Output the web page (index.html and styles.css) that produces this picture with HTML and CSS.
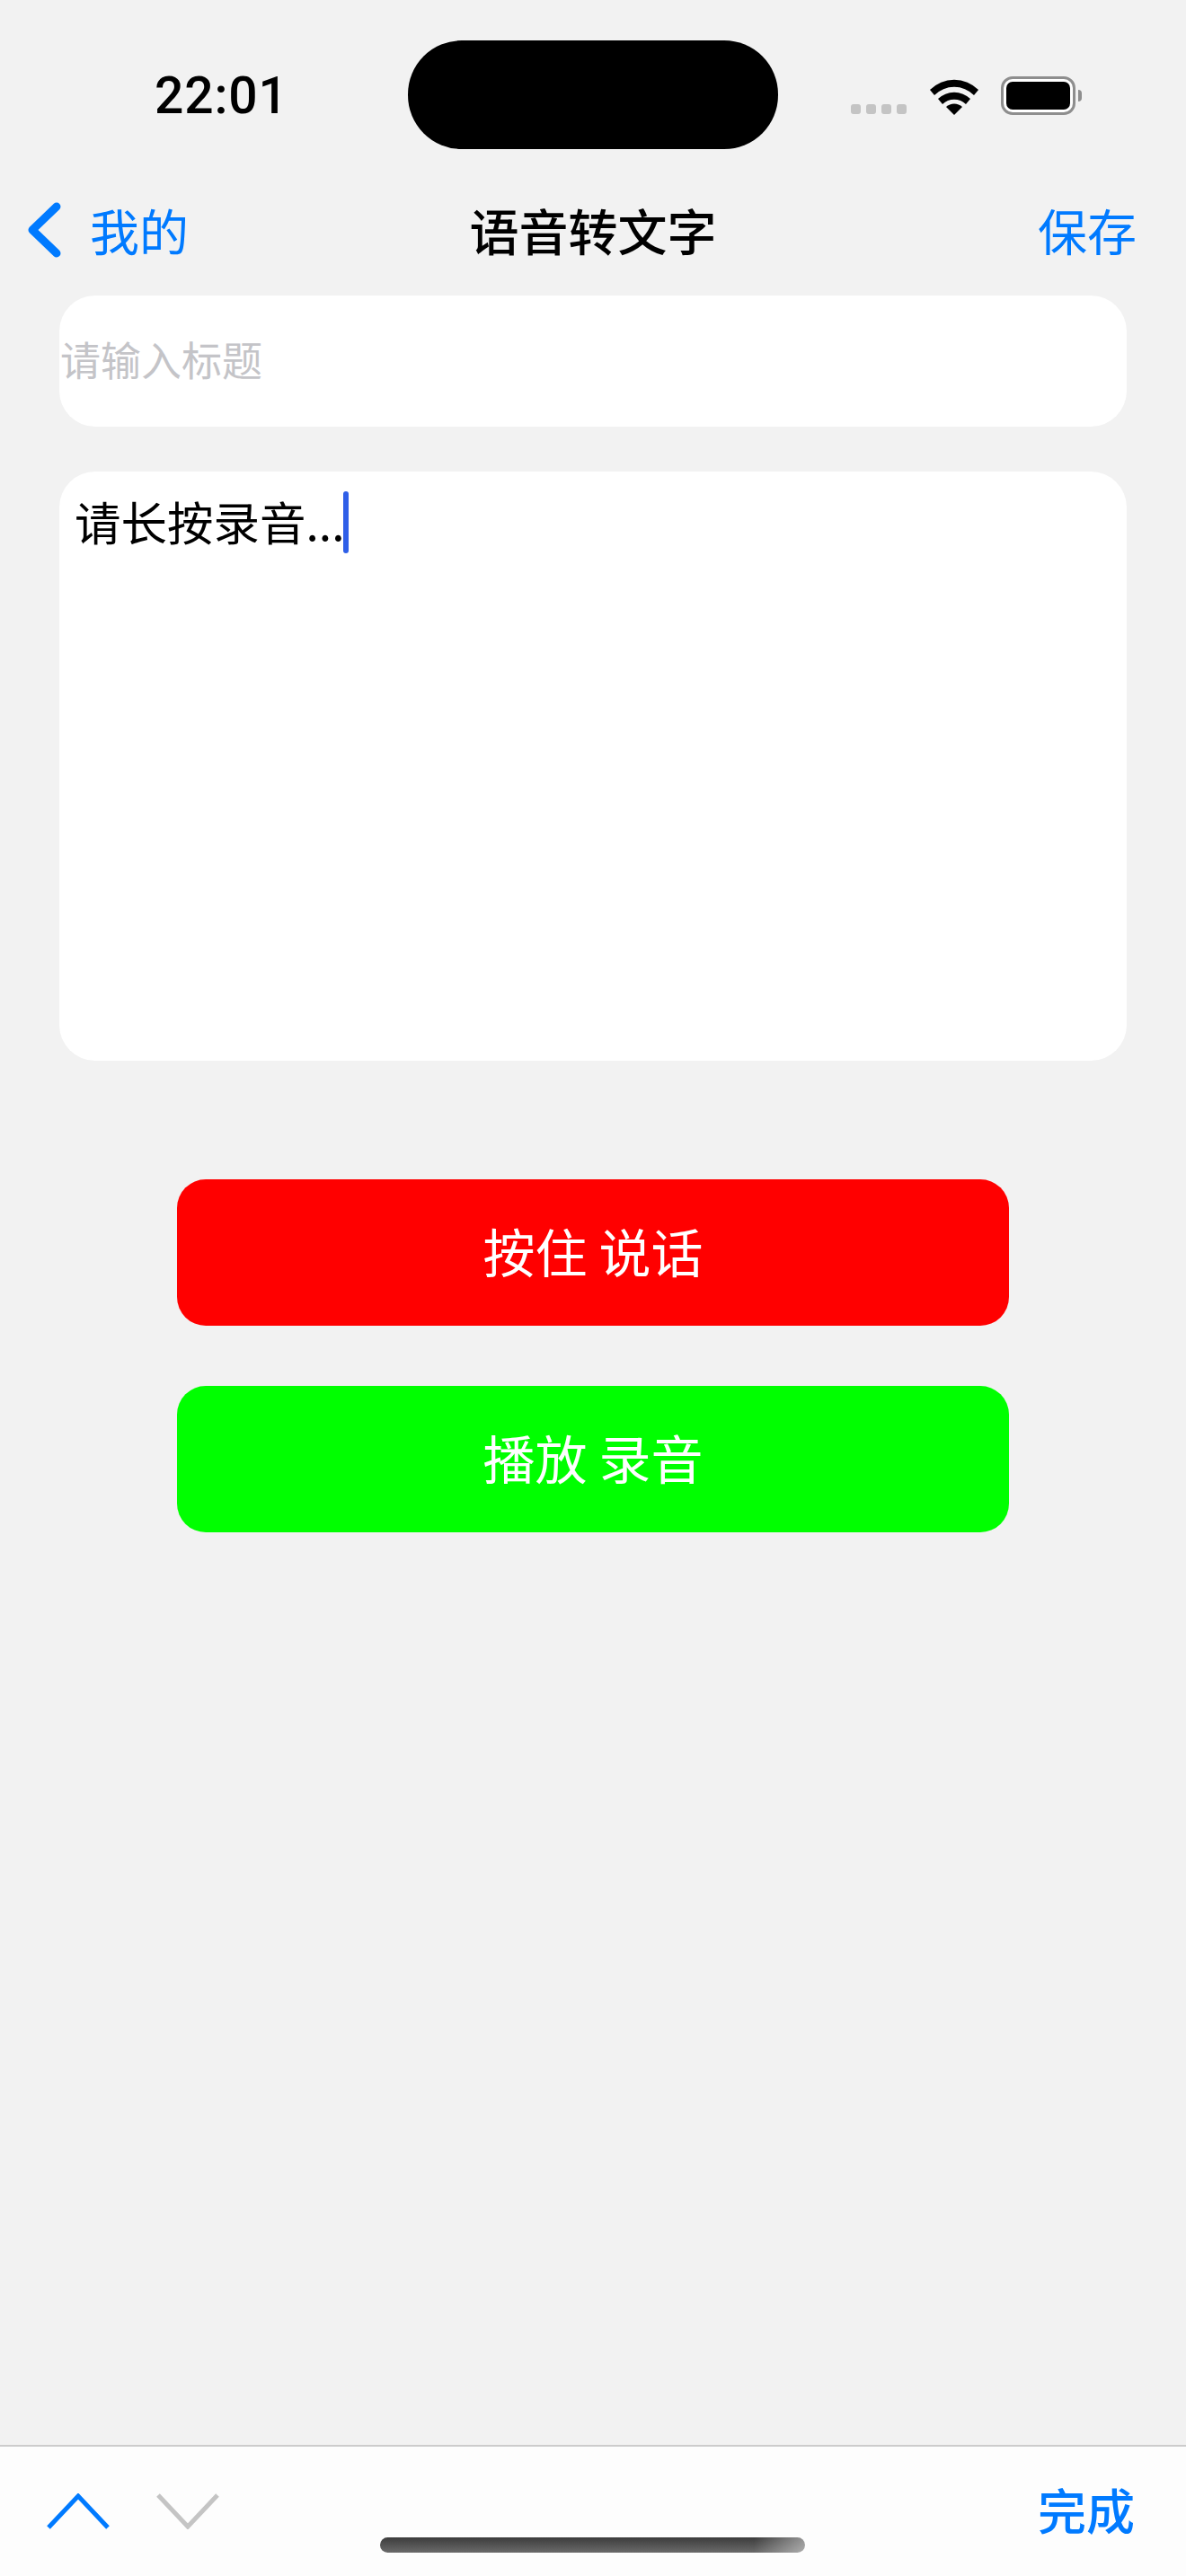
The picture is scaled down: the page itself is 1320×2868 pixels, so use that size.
FILE: index.html
```html
<!DOCTYPE html>
<html lang="zh-CN">
<head>
    <meta charset="UTF-8">
    <meta name="viewport" content="width=device-width, initial-scale=1.0">
    <title>语音转文字</title>
    <link rel="stylesheet" href="styles.css">
</head>
<body>
    <div class="status-bar">
        <span class="time">22:01</span>
        <div class="island"></div>
        <div class="signal">
            <i></i><i></i><i></i><i></i>
        </div>
        <svg class="wifi" width="56" height="42" viewBox="0 0 56 42">
            <path d="M1 14 A38 38 0 0 1 55 14 L50 20 A31 31 0 0 0 6 20 Z"/>
            <path d="M10 24 A26 26 0 0 1 46 24 L41 30 A19 19 0 0 0 15 30 Z"/>
            <path d="M19 33 A13 13 0 0 1 37 33 L28 42 Z"/>
        </svg>
        <div class="battery"><div class="battery-level"></div></div>
        <div class="battery-cap"></div>
    </div>

    <div class="nav-bar">
        <a class="back">
            <svg width="38" height="62" viewBox="0 0 38 62">
                <path d="M33 5 L6 31 L33 57"/>
            </svg>
            <span>我的</span>
        </a>
        <h1>语音转文字</h1>
        <a class="save">保存</a>
    </div>

    <div class="form">
        <input class="title-input" type="text" placeholder="请输入标题">
        <div class="text-box">请长按录音...<span class="caret"></span></div>
        <button class="btn btn-record">按住 说话</button>
        <button class="btn btn-play">播放 录音</button>
    </div>

    <div class="toolbar">
        <svg class="arrow" width="70" height="40" viewBox="0 0 70 40">
            <path class="arrow-on" d="M2 38 L35 3 L68 38"/>
        </svg>
        <svg class="arrow" width="70" height="40" viewBox="0 0 70 40">
            <path class="arrow-off" d="M2 2 L35 37 L68 2"/>
        </svg>
        <a class="done">完成</a>
        <div class="home-indicator"></div>
    </div>
</body>
</html>
```

FILE: styles.css
```css
* {
    box-sizing: border-box;
}

body {
    margin: 0;
    width: 1320px;
    height: 2868px;
    background-color: #f2f2f2;
    font-family: "Noto Sans CJK SC", "Liberation Sans", sans-serif;
    display: flex;
    flex-direction: column;
    overflow: hidden;
}

/* Status bar */
.status-bar {
    height: 190px;
    padding: 45px 0 0 172px;
    display: flex;
    align-items: flex-start;
}

.time {
    font-family: Roboto, sans-serif;
    font-weight: 500;
    font-size: 57px;
    letter-spacing: 0.8px;
    line-height: 40px;
    margin-top: 42px;
    width: 282px;
    color: #000;
}

.island {
    width: 412px;
    height: 121px;
    background-color: #000;
    border-radius: 60px;
}

.signal {
    display: flex;
    gap: 6px;
    margin: 71px 0 0 81px;
}

.signal i {
    width: 11px;
    height: 11px;
    border-radius: 3px;
    background-color: #c4c4c4;
}

.wifi {
    margin: 41px 0 0 25px;
    fill: #000;
}

.battery {
    width: 83px;
    height: 43px;
    margin: 40px 0 0 24px;
    padding: 3px;
    border: 3px solid #8e8e8e;
    border-radius: 13px;
    background-color: #fff;
}

.battery-level {
    height: 100%;
    background-color: #000;
    border-radius: 7px;
}

.battery-cap {
    width: 4px;
    height: 13px;
    margin: 55px 0 0 3px;
    background-color: #8e8e8e;
    border-radius: 0 6px 6px 0;
}

/* Nav bar */
.nav-bar {
    height: 139px;
    position: relative;
    display: flex;
    align-items: flex-start;
    justify-content: space-between;
    color: #007aff;
    font-size: 55px;
    line-height: 78px;
}

.back {
    display: flex;
    align-items: flex-start;
    gap: 32px;
    margin-left: 30px;
}

.back svg {
    margin-top: 35px;
    fill: none;
    stroke: #007aff;
    stroke-width: 9;
    stroke-linecap: round;
    stroke-linejoin: round;
}

.back span {
    display: block;
    margin-top: 26px;
}

.nav-bar h1 {
    position: absolute;
    top: 26px;
    left: 0;
    right: 0;
    margin: 0;
    text-align: center;
    color: #000;
    font-size: 55px;
    line-height: 78px;
    font-weight: 500;
}

.save {
    margin: 26px 55px 0 0;
}

/* Form */
.form {
    padding: 0 66px;
    display: flex;
    flex-direction: column;
}

.title-input {
    width: 100%;
    height: 146px;
    padding: 0 0 6px 1px;
    border: none;
    border-radius: 40px;
    background-color: #fff;
    font-family: inherit;
    font-size: 45px;
    outline: none;
}

.title-input::placeholder {
    color: #c4c4c8;
}

.text-box {
    height: 656px;
    margin-top: 50px;
    padding: 17px 17px;
    border-radius: 40px;
    background-color: #fff;
    color: #000;
    font-size: 51.5px;
    line-height: 76px;
}

.caret {
    display: inline-block;
    width: 6px;
    height: 69px;
    margin-left: -1px;
    border-radius: 3px;
    background-color: #2f5fe8;
    vertical-align: -14px;
}

.btn {
    display: block;
    width: 926px;
    height: 163px;
    margin: 0 auto;
    padding: 0 0 5px;
    border: none;
    border-radius: 32px;
    color: #fff;
    font-family: inherit;
    font-size: 58px;
    cursor: pointer;
}

.btn-record {
    margin-top: 132px;
    background-color: #ff0000;
}

.btn-play {
    margin-top: 67px;
    background-color: #00ff00;
}

/* Bottom toolbar */
.toolbar {
    margin-top: auto;
    height: 146px;
    position: relative;
    padding: 52px 57px 0 52px;
    border-top: 2px solid #cccccc;
    background-color: #fdfdfd;
    display: flex;
    align-items: flex-start;
    gap: 52px;
}

.arrow {
    fill: none;
    stroke-width: 5;
}

.arrow-on {
    stroke: #007aff;
}

.arrow-off {
    stroke: #c4c4c4;
}

.done {
    margin: -20px 0 0 auto;
    color: #007aff;
    font-size: 54px;
    line-height: 76px;
    font-weight: 500;
}

.home-indicator {
    position: absolute;
    left: 423px;
    top: 101px;
    width: 473px;
    height: 17px;
    border-radius: 9px;
    background:
        linear-gradient(90deg, rgba(255, 255, 255, 0) 88%, rgba(255, 255, 255, 0.45) 100%),
        linear-gradient(180deg, #3c3c3c 0%, #6a6a6a 100%);
}
```
